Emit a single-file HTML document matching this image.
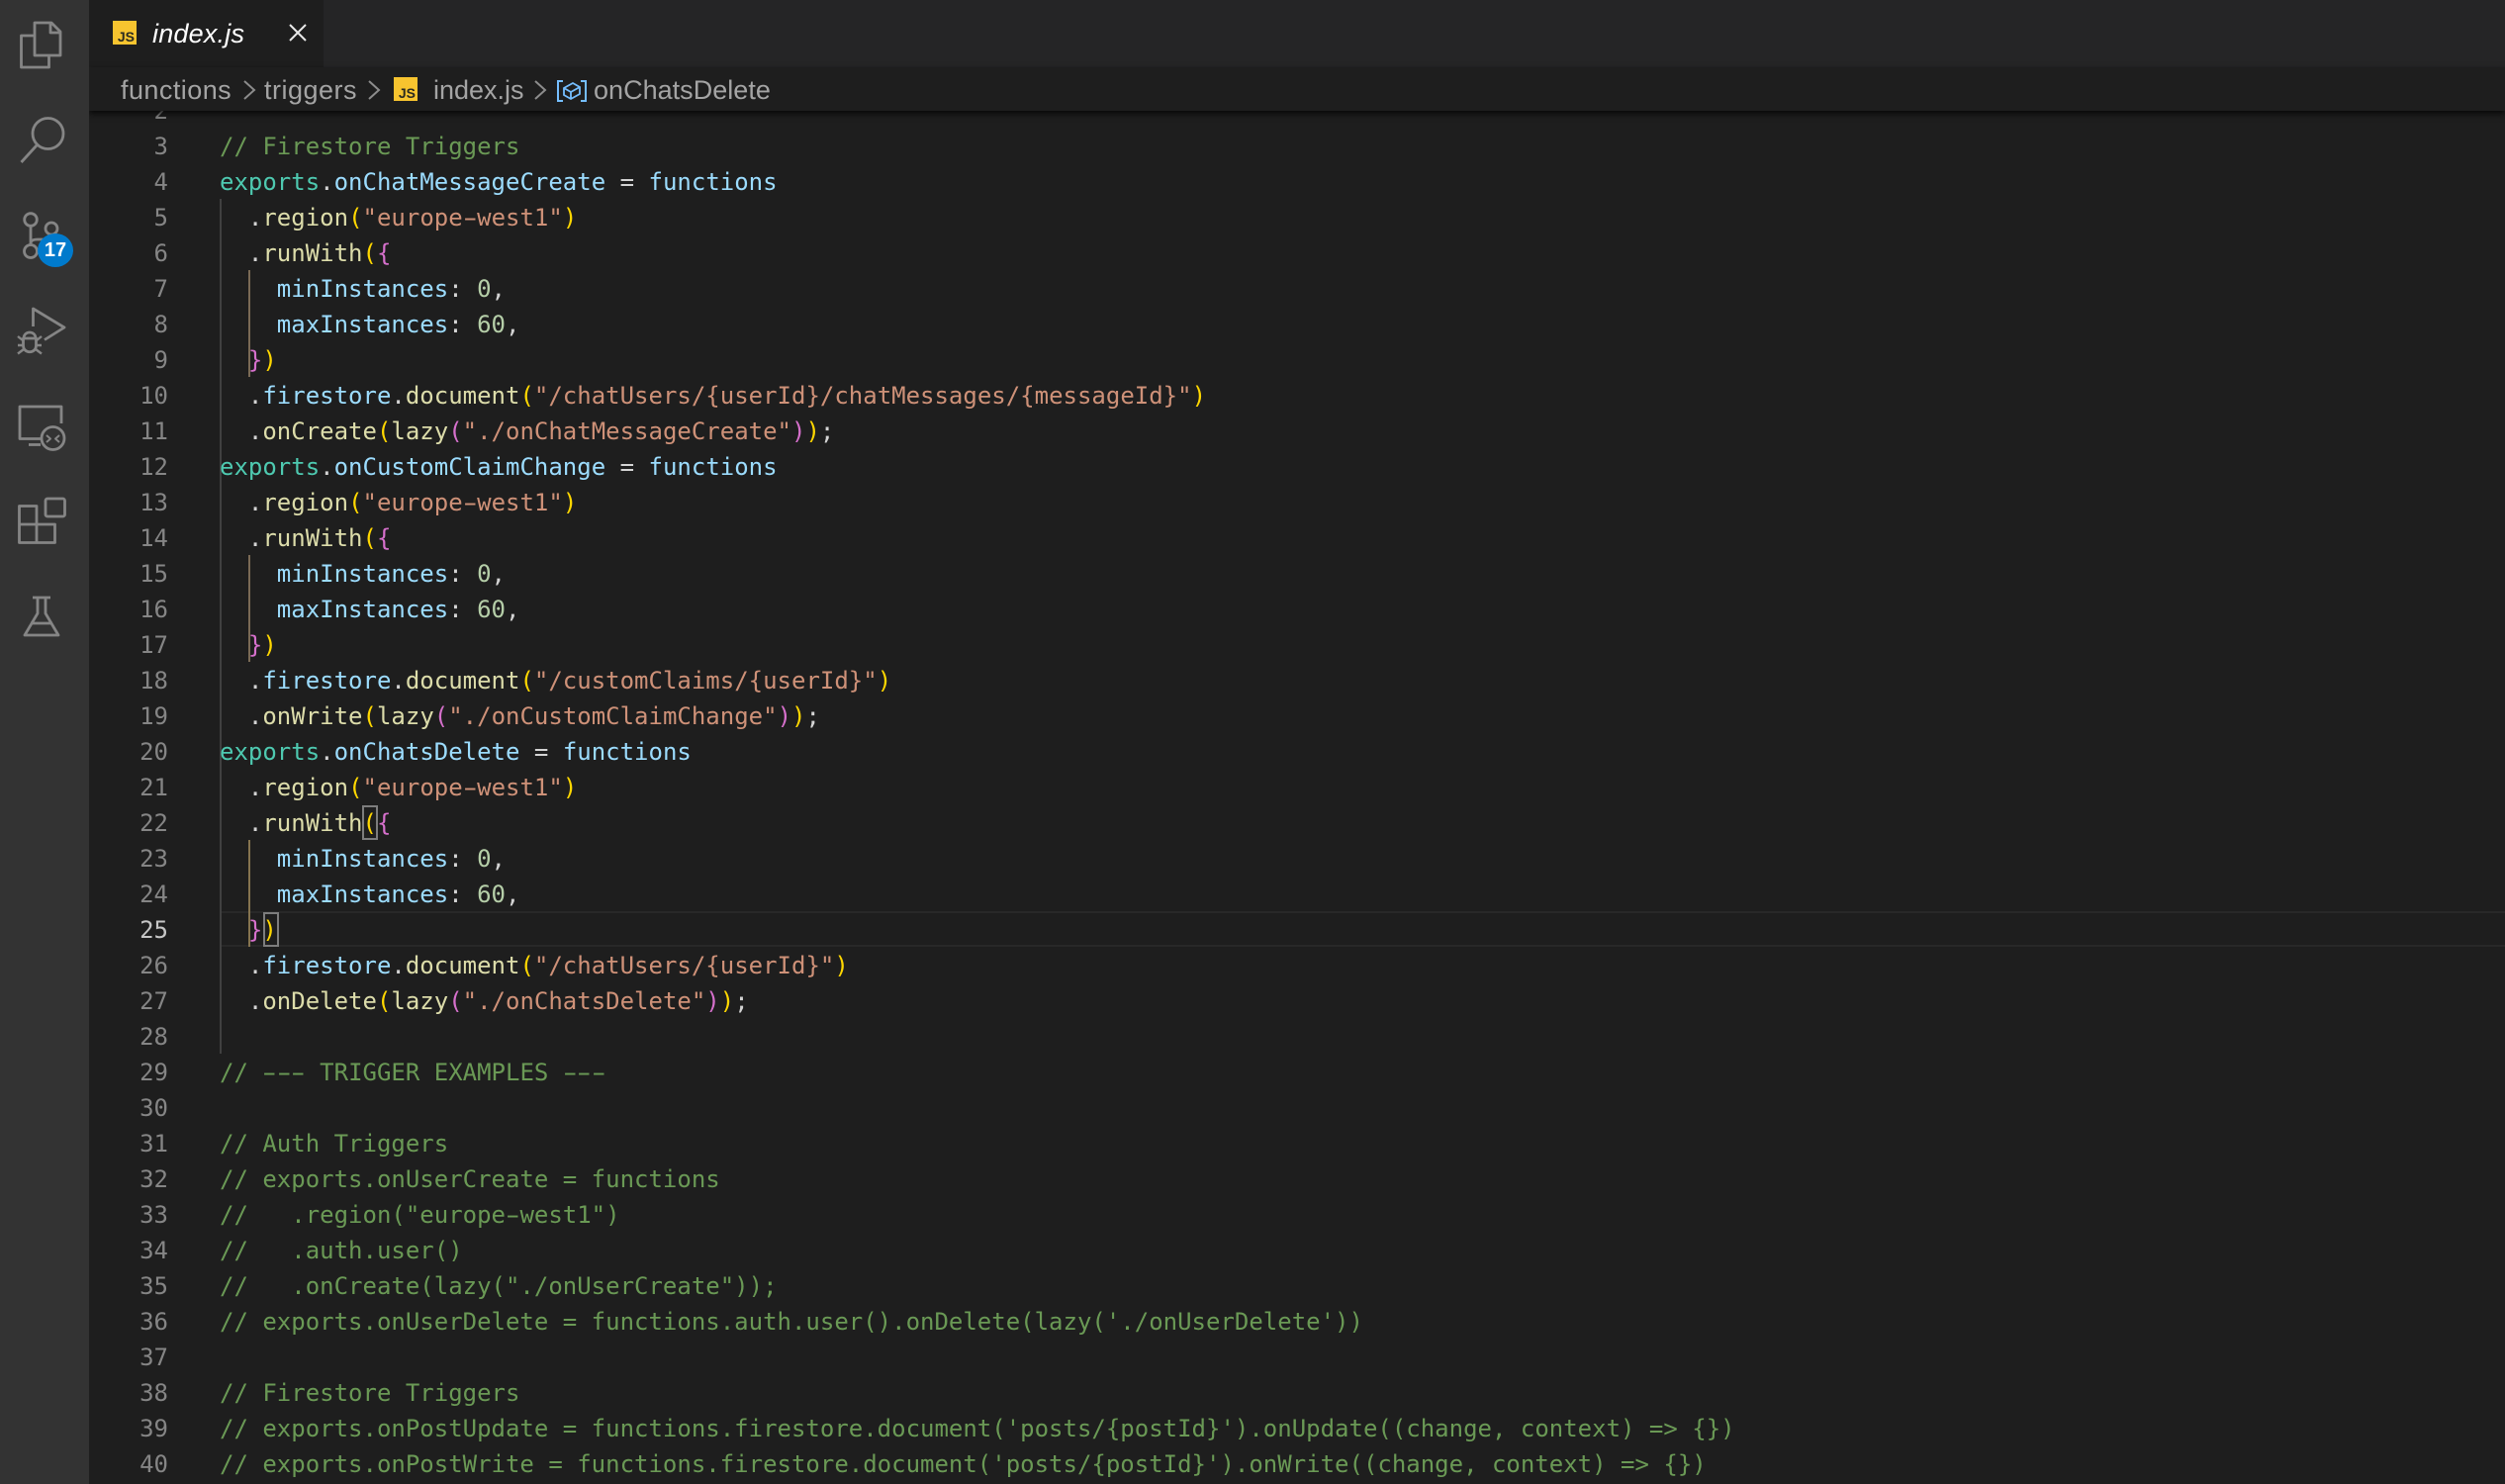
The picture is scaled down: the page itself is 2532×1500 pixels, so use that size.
<!DOCTYPE html>
<html><head><meta charset="utf-8">
<style>
html,body{margin:0;padding:0;background:#1e1e1e;}
#root{position:relative;width:2532px;height:1500px;overflow:hidden;background:#1e1e1e;}
#act{position:absolute;left:0;top:0;width:90px;height:1500px;background:#333;z-index:5;}
#tabs{position:absolute;left:90px;top:0;width:2442px;height:68px;background:#252526;z-index:4;}
#tab{position:absolute;left:0;top:0;width:237px;height:68px;background:#1e1e1e;}
#crumb{position:absolute;left:90px;top:68px;width:2442px;height:44px;background:#1e1e1e;z-index:4;box-shadow:0 3px 6px rgba(0,0,0,.75);}
.s{position:absolute;font-family:"Liberation Sans",sans-serif;font-size:27px;line-height:36px;color:#a4a4a4;white-space:pre;}
.js{position:absolute;width:24px;height:24px;background:#f7c42f;}
.js span{position:absolute;right:2px;bottom:1px;font:700 14px/14px "Liberation Sans",sans-serif;color:#2a2a20;letter-spacing:0;}
#code{position:absolute;left:0;top:0;width:2532px;height:1500px;font-family:"DejaVu Sans Mono","Liberation Mono",monospace;font-size:24px;}
.n{position:absolute;left:90px;width:80px;text-align:right;height:36px;line-height:36px;margin-top:1px;color:#858585;}
.l{position:absolute;left:222px;height:36px;line-height:36px;margin-top:1px;white-space:pre;color:#d4d4d4;}
.c{color:#6a9955}.t{color:#4ec9b0}.p{color:#9cdcfe}.f{color:#dcdcaa}.q{color:#ce9178}.d{color:#b5cea8}.g{color:#ffd700}.v{color:#d670cc}
.h{display:inline-block;transform:scaleX(1.7);}
.ig{position:absolute;width:2px;background:#404040;}
.bg{position:absolute;width:2px;}
.box{position:absolute;border:2px solid #7d7d7d;box-sizing:border-box;}
</style></head><body>
<div id="root">

<div id="code">
<div style="position:absolute;left:222px;top:921px;width:2310px;height:36px;box-sizing:border-box;border-top:2px solid #282828;border-bottom:2px solid #282828;"></div>
<div class="ig" style="left:222px;top:201px;height:864px;"></div>
<div class="bg" style="left:251px;top:273px;height:108px;background:#7a6a55"></div>
<div class="bg" style="left:251px;top:561px;height:108px;background:#7a6a55"></div>
<div class="bg" style="left:251px;top:849px;height:108px;background:#86744f"></div>
<div class="box" style="left:366px;top:814px;width:16px;height:35px;"></div>
<div class="box" style="left:266px;top:922px;width:16px;height:35px;"></div>

<div class="n" style="top:93px">2</div>
<div class="n" style="top:129px">3</div><div class="l" style="top:129px"><span class="c">// Firestore Triggers</span></div>
<div class="n" style="top:165px">4</div><div class="l" style="top:165px"><span class="t">exports</span>.<span class="p">onChatMessageCreate</span> = <span class="p">functions</span></div>
<div class="n" style="top:201px">5</div><div class="l" style="top:201px">  .<span class="f">region</span><span class="g">(</span><span class="q">"europe<span class="h">-</span>west1"</span><span class="g">)</span></div>
<div class="n" style="top:237px">6</div><div class="l" style="top:237px">  .<span class="f">runWith</span><span class="g">(</span><span class="v">{</span></div>
<div class="n" style="top:273px">7</div><div class="l" style="top:273px">    <span class="p">minInstances</span>: <span class="d">0</span>,</div>
<div class="n" style="top:309px">8</div><div class="l" style="top:309px">    <span class="p">maxInstances</span>: <span class="d">60</span>,</div>
<div class="n" style="top:345px">9</div><div class="l" style="top:345px">  <span class="v">}</span><span class="g">)</span></div>
<div class="n" style="top:381px">10</div><div class="l" style="top:381px">  .<span class="p">firestore</span>.<span class="f">document</span><span class="g">(</span><span class="q">"/chatUsers/{userId}/chatMessages/{messageId}"</span><span class="g">)</span></div>
<div class="n" style="top:417px">11</div><div class="l" style="top:417px">  .<span class="f">onCreate</span><span class="g">(</span><span class="f">lazy</span><span class="v">(</span><span class="q">"./onChatMessageCreate"</span><span class="v">)</span><span class="g">)</span>;</div>
<div class="n" style="top:453px">12</div><div class="l" style="top:453px"><span class="t">exports</span>.<span class="p">onCustomClaimChange</span> = <span class="p">functions</span></div>
<div class="n" style="top:489px">13</div><div class="l" style="top:489px">  .<span class="f">region</span><span class="g">(</span><span class="q">"europe<span class="h">-</span>west1"</span><span class="g">)</span></div>
<div class="n" style="top:525px">14</div><div class="l" style="top:525px">  .<span class="f">runWith</span><span class="g">(</span><span class="v">{</span></div>
<div class="n" style="top:561px">15</div><div class="l" style="top:561px">    <span class="p">minInstances</span>: <span class="d">0</span>,</div>
<div class="n" style="top:597px">16</div><div class="l" style="top:597px">    <span class="p">maxInstances</span>: <span class="d">60</span>,</div>
<div class="n" style="top:633px">17</div><div class="l" style="top:633px">  <span class="v">}</span><span class="g">)</span></div>
<div class="n" style="top:669px">18</div><div class="l" style="top:669px">  .<span class="p">firestore</span>.<span class="f">document</span><span class="g">(</span><span class="q">"/customClaims/{userId}"</span><span class="g">)</span></div>
<div class="n" style="top:705px">19</div><div class="l" style="top:705px">  .<span class="f">onWrite</span><span class="g">(</span><span class="f">lazy</span><span class="v">(</span><span class="q">"./onCustomClaimChange"</span><span class="v">)</span><span class="g">)</span>;</div>
<div class="n" style="top:741px">20</div><div class="l" style="top:741px"><span class="t">exports</span>.<span class="p">onChatsDelete</span> = <span class="p">functions</span></div>
<div class="n" style="top:777px">21</div><div class="l" style="top:777px">  .<span class="f">region</span><span class="g">(</span><span class="q">"europe<span class="h">-</span>west1"</span><span class="g">)</span></div>
<div class="n" style="top:813px">22</div><div class="l" style="top:813px">  .<span class="f">runWith</span><span class="g">(</span><span class="v">{</span></div>
<div class="n" style="top:849px">23</div><div class="l" style="top:849px">    <span class="p">minInstances</span>: <span class="d">0</span>,</div>
<div class="n" style="top:885px">24</div><div class="l" style="top:885px">    <span class="p">maxInstances</span>: <span class="d">60</span>,</div>
<div class="n" style="top:921px;color:#c6c6c6">25</div><div class="l" style="top:921px">  <span class="v">}</span><span class="g">)</span></div>
<div class="n" style="top:957px">26</div><div class="l" style="top:957px">  .<span class="p">firestore</span>.<span class="f">document</span><span class="g">(</span><span class="q">"/chatUsers/{userId}"</span><span class="g">)</span></div>
<div class="n" style="top:993px">27</div><div class="l" style="top:993px">  .<span class="f">onDelete</span><span class="g">(</span><span class="f">lazy</span><span class="v">(</span><span class="q">"./onChatsDelete"</span><span class="v">)</span><span class="g">)</span>;</div>
<div class="n" style="top:1029px">28</div>
<div class="n" style="top:1065px">29</div><div class="l c" style="top:1065px">// <span class="h">-</span><span class="h">-</span><span class="h">-</span> TRIGGER EXAMPLES <span class="h">-</span><span class="h">-</span><span class="h">-</span></div>
<div class="n" style="top:1101px">30</div>
<div class="n" style="top:1137px">31</div><div class="l c" style="top:1137px">// Auth Triggers</div>
<div class="n" style="top:1173px">32</div><div class="l c" style="top:1173px">// exports.onUserCreate = functions</div>
<div class="n" style="top:1209px">33</div><div class="l c" style="top:1209px">//   .region("europe<span class="h">-</span>west1")</div>
<div class="n" style="top:1245px">34</div><div class="l c" style="top:1245px">//   .auth.user()</div>
<div class="n" style="top:1281px">35</div><div class="l c" style="top:1281px">//   .onCreate(lazy("./onUserCreate"));</div>
<div class="n" style="top:1317px">36</div><div class="l c" style="top:1317px">// exports.onUserDelete = functions.auth.user().onDelete(lazy('./onUserDelete'))</div>
<div class="n" style="top:1353px">37</div>
<div class="n" style="top:1389px">38</div><div class="l c" style="top:1389px">// Firestore Triggers</div>
<div class="n" style="top:1425px">39</div><div class="l c" style="top:1425px">// exports.onPostUpdate = functions.firestore.document('posts/{postId}').onUpdate((change, context) =&gt; {})</div>
<div class="n" style="top:1461px">40</div><div class="l c" style="top:1461px">// exports.onPostWrite = functions.firestore.document('posts/{postId}').onWrite((change, context) =&gt; {})</div>
</div>

<div id="tabs"><div id="tab"></div></div>
<div class="js" style="left:114px;top:21px;z-index:6"><span>JS</span></div>
<div class="s" style="left:154px;top:16px;z-index:6;font-style:italic;color:#fff;letter-spacing:.2px">index.js</div>
<svg style="position:absolute;left:288px;top:20px;z-index:6" width="26" height="26" viewBox="0 0 26 26"><path d="M5 5 L21 21 M21 5 L5 21" stroke="#e8e8e8" stroke-width="2" fill="none"/></svg>

<div id="crumb"></div>
<div class="s" style="left:122px;top:73px;z-index:6;letter-spacing:.45px">functions</div>
<div class="s" style="left:267px;top:73px;z-index:6;letter-spacing:.5px">triggers</div>
<div class="s" style="left:438px;top:73px;z-index:6">index.js</div>
<div class="s" style="left:600px;top:73px;z-index:6;letter-spacing:.02px">onChatsDelete</div>
<div class="js" style="left:398px;top:78px;z-index:6"><span>JS</span></div>
<svg style="position:absolute;left:0;top:0;z-index:6" width="800" height="112" viewBox="0 0 800 112" fill="none">
<path d="M247 82 L257 91 L247 100 M373 82 L383 91 L373 100 M541 82 L551 91 L541 100" stroke="#8c8c8c" stroke-width="2"/>
<g stroke="#75beff" stroke-width="2">
<path d="M569 82 H564 V102 H569 M587 82 H592 V102 H587"/>
<path d="M570 89 L579 84 L586 88 V95 L577 100 L570 96 Z M570 89 L577 93 L586 88 M577 93 V100" stroke-width="1.8"/>
</g>
</svg>

<div id="act">
<svg width="90" height="700" viewBox="0 0 90 700" fill="none" stroke="#858585" stroke-width="2.8" stroke-linejoin="round">
<path d="M35 23 H52 L61 32 V56 H35 Z M51 23 V33 H61"/>
<path d="M34 36 H21.500 V68 H49.500 V57"/>
<circle cx="48.500" cy="135" r="15.500"/>
<path d="M37 147 L21.500 164"/>
<circle cx="31" cy="222" r="6.300"/>
<circle cx="31" cy="254" r="6.500"/>
<circle cx="52" cy="231" r="6"/>
<path d="M31 228 V248 M31 246 C31 243 34 242 38 242 H46 C50 242 52 240 52 237"/>
<path d="M33.500 330 V312 L65 331 L45 343.500"/>
<path d="M24 342 C24 334 36 334 36 342 Z M23.500 342 H36.500 V349 C36.500 358 23.500 358 23.500 349 Z"/>
<path d="M23 344 L18 340 M37 344 L42 340 M23 349 H18 M37 349 H42 M24 353 L18 357.500 M36 353 L42 357.500" stroke-width="2.400"/>
<path d="M41 443.500 H20 V411 H62 V428"/>
<path d="M29 449.500 H41"/>
<circle cx="53.500" cy="443" r="11.500"/>
<path d="M47 440 L51 443.500 L47 447 M60 440 L56 443.500 L60 447" stroke-width="2"/>
<path d="M19.500 511.500 H37 V530 H55.500 V548.500 H19.500 Z M19.500 530 H37 V548.500"/>
<rect x="46" y="504" width="19.500" height="18" rx="2"/>
<path d="M38 604 V620 L25 642 H59 L46 620 V604 M33 604 H51 M31 630 H53"/>
</svg>
<div style="position:absolute;left:38px;top:236px;width:36px;height:34px;border-radius:50%;background:#007acc;color:#fff;font:700 20px/34px 'Liberation Sans',sans-serif;text-align:center;">17</div>
</div>

</div>
</body></html>
